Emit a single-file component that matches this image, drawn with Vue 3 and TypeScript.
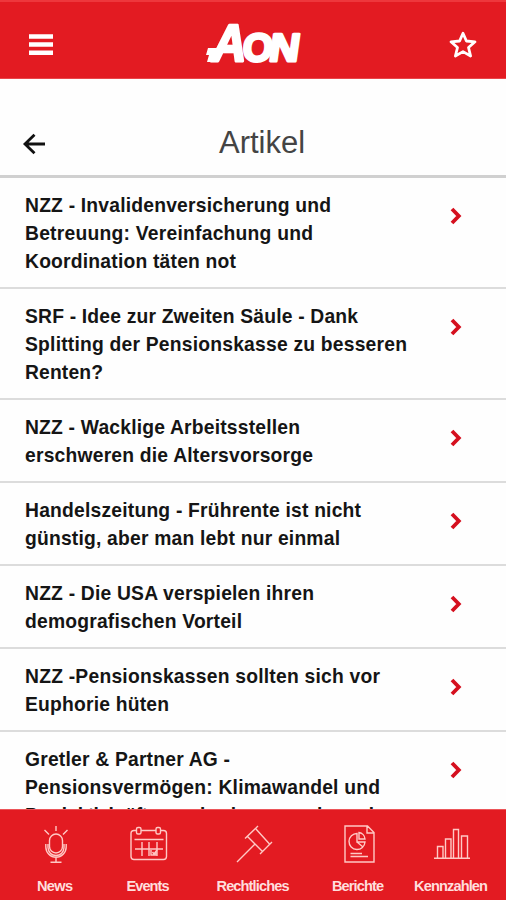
<script setup lang="ts">
interface Article { lines: { text: string; width: number }[] }
interface Tab { label: string; icon: string; width: number }

const articles: Article[] = [
  { lines: [{ text: 'NZZ - Invalidenversicherung und', width: 306 }, { text: 'Betreuung: Vereinfachung und', width: 288 }, { text: 'Koordination täten not', width: 211 }] },
  { lines: [{ text: 'SRF - Idee zur Zweiten Säule - Dank', width: 333 }, { text: 'Splitting der Pensionskasse zu besseren', width: 382 }, { text: 'Renten?', width: 78 }] },
  { lines: [{ text: 'NZZ - Wacklige Arbeitsstellen', width: 275 }, { text: 'erschweren die Altersvorsorge', width: 288 }] },
  { lines: [{ text: 'Handelszeitung - Frührente ist nicht', width: 336 }, { text: 'günstig, aber man lebt nur einmal', width: 315 }] },
  { lines: [{ text: 'NZZ - Die USA verspielen ihren', width: 289 }, { text: 'demografischen Vorteil', width: 217 }] },
  { lines: [{ text: 'NZZ -Pensionskassen sollten sich vor', width: 355 }, { text: 'Euphorie hüten', width: 144 }] },
  { lines: [{ text: 'Gretler & Partner AG -', width: 205 }, { text: 'Pensionsvermögen: Klimawandel und', width: 355 }, { text: 'Produktivkräfte werden immer mehr und', width: 349 }] },
]

const tabs: Tab[] = [
  { label: 'News', icon: 'mic', width: 36 },
  { label: 'Events', icon: 'calendar', width: 43 },
  { label: 'Rechtliches', icon: 'gavel', width: 73 },
  { label: 'Berichte', icon: 'report', width: 52 },
  { label: 'Kennzahlen', icon: 'chart', width: 74 },
]
</script>

<template>
  <div class="screen">
    <header class="topbar">
      <svg class="menu" width="24" height="22" viewBox="0 0 24 22"><path d="M0 2.5H24M0 10.5H24M0 18.7H24" stroke="#fff" stroke-width="4.4" /></svg>
      <svg class="logo" width="110" height="68" viewBox="0 -14 110 68" aria-label="Aon">
        <g fill="#fff" stroke="#fff" stroke-width="3" stroke-linejoin="round" font-family="Liberation Sans, sans-serif" font-weight="700">
          <text transform="translate(5 41) skewX(-10)" font-size="52" textLength="34" lengthAdjust="spacingAndGlyphs">A</text>
          <text transform="translate(37 41) skewX(-4)" font-size="39" textLength="30" lengthAdjust="spacingAndGlyphs">O</text>
          <text transform="translate(63 41) skewX(-8)" font-size="39" textLength="30" lengthAdjust="spacingAndGlyphs">N</text>
        </g>
        <path d="M3 28H15L13 36L9 42H2L4 35H1Z" fill="#fff" />
      </svg>
      <svg class="star" width="30" height="30" viewBox="0 0 30 30"><path d="M15 3.2L18.4 11L27 11.8L20.5 17.5L22.6 26L15 21.6L7.4 26L9.5 17.5L3 11.8L11.6 11Z" fill="none" stroke="#fff" stroke-width="2.8" stroke-linejoin="round" /></svg>
    </header>

    <div class="titlebar">
      <svg class="back" width="24" height="22" viewBox="0 0 24 22"><path d="M23 11H3M12.5 1.8L3 11L12.5 20.2" fill="none" stroke="#111" stroke-width="2.8" /></svg>
      <h1>Artikel</h1>
    </div>

    <main class="list">
      <article v-for="(article, i) in articles" :key="i" class="row">
        <svg class="headline" width="400" :height="article.lines.length * 28">
          <text v-for="(line, n) in article.lines" :key="n" x="0" :y="20.5 + n * 28" :textLength="line.width">{{ line.text }}</text>
        </svg>
        <svg class="chevron" width="12" height="18" viewBox="0 0 12 18"><path d="M2 2L8.8 9L2 16" fill="none" stroke="#d5101f" stroke-width="3.8" /></svg>
      </article>
    </main>

    <nav class="tabs">
      <div v-for="tab in tabs" :key="tab.label" class="tab">
        <svg class="icon" width="42" height="40" viewBox="0 0 42 40">
          <g v-if="tab.icon === 'mic'">
            <rect x="15.5" y="10" width="13" height="19" rx="6.5" />
            <path d="M11.8 20V23A10.2 10.2 0 0 0 32.2 23V20M14 20V23.5A8 8 0 0 0 30 23.5V20M22 33V38M16.5 38.3H27.5M22 2V7M10.5 6L15 10.5M33.5 6L29 10.5" />
          </g>
          <g v-else-if="tab.icon === 'calendar'">
            <path d="M9 6.5H7A3 3 0 0 0 4 9.5V32.5A3 3 0 0 0 7 35.5H36.5A3 3 0 0 0 39.5 32.5V9.5A3 3 0 0 0 36.5 6.5H34M14 6.5H29M7.5 15.5H36.5M8 25H36M15 18V32M22 18V32M30 18V32" />
            <rect x="9.5" y="3.5" width="4.5" height="6.5" rx="1.5" /><rect x="29" y="3.5" width="4.5" height="6.5" rx="1.5" />
            <path d="M24 26V31H29V28M25.5 28L27 30L30 26" />
          </g>
          <g v-else-if="tab.icon === 'gavel'">
            <path d="M5 38L22.5 20.5M13 14.5L26 2M28 30L40 18M15.5 12.5L30.5 27.5M23.5 4.5L37.5 20" />
          </g>
          <g v-else-if="tab.icon === 'report'">
            <path d="M8 2H30.5L37 8.5V38H8ZM30 2V9H37M20 9.5A8 8 0 1 0 28 18H20ZM22 8.5A7 7 0 0 1 28 15H22ZM20 18L26 23M13.5 29.5H25M13.5 32.5H31" />
          </g>
          <g v-else>
            <path d="M4 34.2H40M7.5 34V22.5H13V34M15.5 34V15H21V34M23.5 34V5.5H28.5V34M31.5 34V12H37.5V34" />
          </g>
        </svg>
        <svg class="label" width="90" height="20"><text x="45" y="14.5" text-anchor="middle" :textLength="tab.width">{{ tab.label }}</text></svg>
      </div>
    </nav>
  </div>
</template>

<style>
body { margin: 0; background: #fefefe; overflow: hidden; }
</style>

<style scoped>
.screen { width: 506px; height: 900px; display: flex; flex-direction: column; overflow: hidden; background: #fefefe; font-family: "Liberation Sans", Arial, sans-serif; }
svg { display: block; flex: none; }
.topbar { height: 79px; flex: none; box-sizing: border-box; border-top: 2px solid #ee373c; border-bottom: 1px solid #e9464a; background: #e31b22; display: grid; grid-template-columns: 205px 1fr 58px; align-items: start; }
.menu { margin: 32px 0 0 29px; }
.logo { margin-top: 4px; }
.star { margin-top: 28px; }
.titlebar { height: 99px; flex: none; box-sizing: border-box; border-bottom: 3px solid #d0d0d0; display: grid; grid-template-columns: 219px 1fr; align-items: start; }
.back { margin: 54px 0 0 22px; }
h1 { margin: 46px 0 0; font-size: 31px; line-height: 36px; font-weight: 400; color: #444; }
.list { flex: 1; min-height: 0; overflow: hidden; }
.row { box-sizing: border-box; padding: 13px 0 12px 25px; display: flex; border-bottom: 2px solid #dcdcdc; }
.headline text { font-size: 19.3px; font-weight: 700; fill: #151515; }
.chevron { margin: 16px 0 0 25px; }
.tabs { height: 91px; flex: none; background: #e31b22; display: grid; grid-template-columns: 110px 76px 134px 76px 110px; box-sizing: border-box; border-top: 1px solid #ec5559; }
.tab { display: flex; flex-direction: column; align-items: center; padding-top: 14px; }
.icon { fill: none; stroke: #ffc9c5; stroke-width: 1.4; }
.label { margin-top: 12px; }
.label text { font-size: 14.6px; font-weight: 700; fill: #ffdedd; }
</style>
